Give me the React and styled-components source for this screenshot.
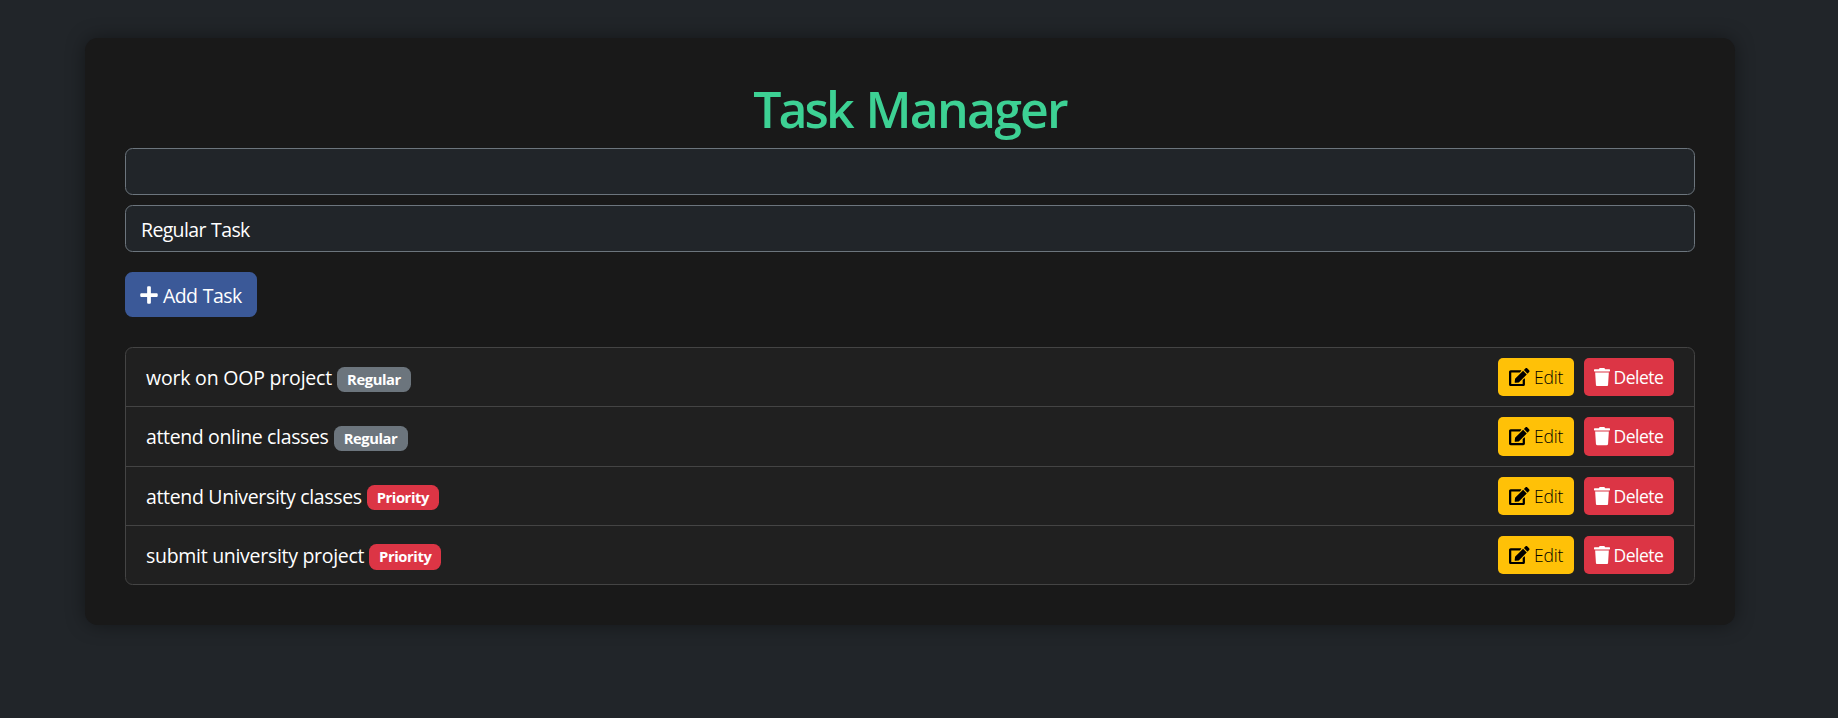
import React from "react";
import styled, { createGlobalStyle } from "styled-components";
import { FaEdit, FaPlus, FaTrash } from "react-icons/fa";

const GlobalStyle = createGlobalStyle`
  *, *::before, *::after { box-sizing: border-box; }
  body {
    margin: 0;
    min-height: 100vh;
    overflow: hidden;
    background: #212529;
    color: #fff;
    font-family: "Segoe UI", "Open Sans", "Noto Sans", sans-serif;
    font-size: 19.5px;
    line-height: 30px;
  }
`;

const Card = styled.main`
  width: 1650px;
  margin: 38px 0 0 85px;
  padding: 40px;
  border-radius: 12.5px;
  background: #191919;
  box-shadow: 0 0 18.75px rgba(0, 0, 0, 0.4);
`;

const Title = styled.h1`
  margin: 0 0 10px;
  padding-top: 1px;
  height: 60px;
  color: #3dd194;
  font-size: 50px;
  font-weight: 600;
  line-height: 60px;
  letter-spacing: -1.8px;
  word-spacing: 2.5px;
  text-align: center;
`;

const TightWord = styled.span`
  letter-spacing: -2.9px;
`;

const fieldStyles = `
  display: block;
  width: 100%;
  height: 47px;
  margin: 0 0 10px;
  padding: 8.5px 15px 6.5px;
  border: 1px solid #6c757d;
  border-radius: 7.5px;
  background: #212529;
  color: #fff;
  font: inherit;
  letter-spacing: -0.65px;
  word-spacing: 1px;
  appearance: none;
  outline: none;
`;

const TextField = styled.input`${fieldStyles}`;
const SelectField = styled.select`${fieldStyles}`;

const AddButton = styled.button`
  display: flex;
  align-items: center;
  gap: 5px;
  width: 132px;
  height: 45px;
  margin: 20px 0 30px;
  padding: 2px 15px 0;
  border: 0;
  border-radius: 7.5px;
  background: #3b5998;
  color: #fff;
  font: inherit;
  letter-spacing: -0.6px;
  word-spacing: 1px;
  white-space: nowrap;
  svg { flex: none; width: 18px; height: 20px; margin-top: -1px; }
`;

const TaskList = styled.ul`
  margin: 0;
  padding: 0;
  overflow: hidden;
  list-style: none;
  border: 1px solid #444;
  border-radius: 7.5px;
  background: #202020;
`;

const TaskRow = styled.li`
  display: flex;
  align-items: center;
  justify-content: space-between;
  padding: 10px 20px;
  & + & { border-top: 1px solid #444; }
`;

const TaskLabel = styled.div`
  display: flex;
  align-items: center;
  gap: 5px;
  padding-top: 2px;
`;

const TaskName = styled.span`
  letter-spacing: ${({ $spacing }) => $spacing}px;
`;

const Badge = styled.span`
  width: ${({ $priority }) => ($priority ? 72 : 74)}px;
  height: 25.25px;
  margin-top: 2px;
  border-radius: 7.5px;
  background: ${({ $priority }) => ($priority ? "#dc3545" : "#6c757d")};
  font-size: 14.75px;
  font-weight: 700;
  line-height: 25.5px;
  letter-spacing: -0.4px;
  text-align: center;
`;

const Actions = styled.div`
  display: flex;
  gap: 10px;
`;

const ActionButton = styled.button`
  display: flex;
  align-items: center;
  gap: ${({ $danger }) => ($danger ? 3.5 : 4.5)}px;
  width: ${({ $danger }) => ($danger ? 90 : 76)}px;
  height: 38.25px;
  padding: 0 0 0 ${({ $danger }) => ($danger ? 10 : 11)}px;
  border: 0;
  border-radius: 5px;
  background: ${({ $danger }) => ($danger ? "#dc3545" : "#ffc107")};
  color: ${({ $danger }) => ($danger ? "#fff" : "#000")};
  font: inherit;
  font-size: 17.5px;
  font-weight: ${({ $danger }) => ($danger ? 400 : 300)};
  letter-spacing: ${({ $danger }) => ($danger ? -0.5 : -0.2)}px;
  white-space: nowrap;
  svg {
    flex: none;
    width: ${({ $danger }) => ($danger ? 16 : 20.5)}px;
    height: 18.25px;
  }
`;

const tasks = [
  { name: "work on OOP project", spacing: -0.2 },
  { name: "attend online classes", spacing: -0.36 },
  { name: "attend University classes", spacing: -0.34, priority: true },
  { name: "submit university project", spacing: -0.29, priority: true },
];

export default function App() {
  return (
    <>
      <GlobalStyle />
      <Card>
        <Title><TightWord>Task</TightWord> Manager</Title>
        <TextField aria-label="Task name" />
        <SelectField aria-label="Task type" defaultValue="regular">
          <option value="regular">Regular Task</option>
        </SelectField>
        <AddButton type="button"><FaPlus />Add Task</AddButton>
        <TaskList>
          {tasks.map(({ name, spacing, priority }) => (
            <TaskRow key={name}>
              <TaskLabel>
                <TaskName $spacing={spacing}>{name}</TaskName>
                <Badge $priority={priority}>{priority ? "Priority" : "Regular"}</Badge>
              </TaskLabel>
              <Actions>
                <ActionButton type="button"><FaEdit />Edit</ActionButton>
                <ActionButton type="button" $danger><FaTrash />Delete</ActionButton>
              </Actions>
            </TaskRow>
          ))}
        </TaskList>
      </Card>
    </>
  );
}
